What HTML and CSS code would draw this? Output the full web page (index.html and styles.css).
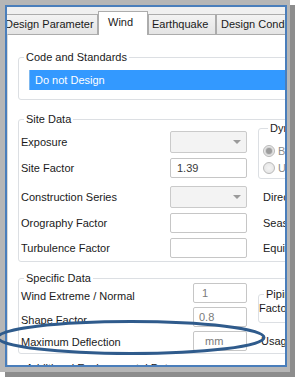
FILE: index.html
```
<!DOCTYPE html>
<html>
<head>
<meta charset="utf-8">
<link rel="stylesheet" href="styles.css">
</head>
<body>
<div class="shot">
  <div class="frame">
    <div class="tabs">
      <div class="tab t-dp">Design Parameter</div>
      <div class="tab active t-wind">Wind</div>
      <div class="tab t-eq">Earthquake</div>
      <div class="tab t-dc">Design Condition</div>
    </div>
    <div class="panel">
      <fieldset class="group g-code">
        <legend>Code and Standards</legend>
        <div class="listsel">Do not Design</div>
      </fieldset>

      <fieldset class="group g-site">
        <legend>Site Data</legend>
        <div class="site-grid">
          <div class="lbl h22">Exposure</div>
          <div class="dd"><span class="arrow"></span></div>
          <fieldset class="group sub g-dyn">
            <legend>Dynamic</legend>
            <div class="radio-row"><span class="radio on"></span><span>Basic</span></div>
            <div class="radio-row"><span class="radio"></span><span>User</span></div>
          </fieldset>

          <div class="lbl h20">Site Factor</div>
          <div class="inp">1.39</div>

          <div class="lbl h22">Construction Series</div>
          <div class="dd"><span class="arrow"></span></div>
          <div class="lbl h22 rlbl">Direction Factor</div>

          <div class="lbl h20">Orography Factor</div>
          <div class="inp"></div>
          <div class="lbl h20 rlbl">Season Factor</div>

          <div class="lbl h20">Turbulence Factor</div>
          <div class="inp"></div>
          <div class="lbl h20 rlbl">Equivalent Factor</div>
        </div>
      </fieldset>

      <fieldset class="group g-spec">
        <legend>Specific Data</legend>
        <div class="spec-grid">
          <div class="lbl h20 low">Wind Extreme / Normal</div>
          <div class="inp gray p-one">1</div>
          <fieldset class="group sub g-pipe">
            <legend>Piping</legend>
            <div class="lbl facto">Factor</div>
          </fieldset>

          <div class="lbl h20 low">Shape Factor</div>
          <div class="inp gray">0.8</div>

          <div class="lbl h20 low1">Maximum Deflection</div>
          <div class="inp gray p-mm">mm</div>
          <div class="lbl h20 rlbl2">Usage</div>
        </div>
      </fieldset>

      <fieldset class="group g-add">
        <legend>Additional Environmental Data</legend>
      </fieldset>
    </div>
  </div>
</div>
<svg class="mark" width="295" height="377" viewBox="0 0 295 377">
  <ellipse cx="131" cy="337.5" rx="133" ry="16" fill="none" stroke="#2f5b8c" stroke-width="3"/>
</svg>
</body>
</html>
```
FILE: styles.css
```
* { box-sizing: border-box; }

body {
  margin: 0;
  width: 295px;
  height: 377px;
  overflow: hidden;
  position: relative;
  background: #ffffff;
  font-family: "Liberation Sans", Arial, sans-serif;
  font-size: 11px;
  color: #1a1a1a;
}

.shot {
  width: 290px;
  height: 372px;
  padding: 5px 0 0 5px;
  background: #b6b6b6;
  box-shadow: 5px 5px 0 #8d8d8d;
}

.frame {
  width: 282px;
  height: 362px;
  border: 2px solid #4a7ebb;
  background: #f0f0f0;
  overflow: hidden;
}

/* tabs */
.tabs {
  display: flex;
  align-items: flex-end;
  height: 27px;
  margin-left: -7px;
  white-space: nowrap;
}

.tab {
  flex: none;
  height: 20px;
  line-height: 19px;
  border: 1px solid #acacac;
  border-bottom: none;
  background: linear-gradient(#f3f3f3, #e4e4e4);
  color: #1a1a1a;
}

.t-dp { width: 98px; padding-left: 4px; }
.t-eq { width: 68px; padding-left: 3px; }
.t-dc { width: 90px; padding-left: 4px; }

.tab.active {
  height: 24px;
  line-height: 21px;
  background: #ffffff;
  position: relative;
  z-index: 1;
  margin-bottom: -1px;
}
.t-wind { width: 50px; padding-left: 9px; }

/* panel */
.panel {
  width: 430px;
  height: 340px;
  background: #ffffff;
  border-top: 1px solid #acacac;
  border-left: 1px solid #d9d9d9;
  padding-left: 10px;
}

fieldset.group {
  margin: 0;
  padding: 0;
  min-width: 0;
  border: 1px solid #dcdfe3;
  border-radius: 3px;
}

legend {
  padding: 0 2px;
  margin-left: 5px;
  line-height: 13px;
  color: #1a1a1a;
}

.g-code { margin-top: 16px !important; }
.g-site { margin-top: 13px !important; }
.g-spec { margin-top: 10px !important; }
.g-add { margin-top: 8px !important; height: 30px; }

.listsel {
  margin: 6px 0 9px 10px;
  height: 20px;
  line-height: 20px;
  padding-left: 5px;
  background: #3399ff;
  color: #ffffff;
  border-left: 1px solid #7db8f0;
}

/* site grid */
.site-grid {
  display: grid;
  grid-template-columns: 149px 77px 160px;
  grid-template-rows: 27px 28px 27px 25px 20px;
  align-items: start;
  margin: 5px 0 3px 2px;
}

.lbl { white-space: nowrap; }
.h22 { height: 22px; line-height: 22px; }
.h20 { height: 20px; line-height: 20px; }
.rlbl { padding-left: 16px; }

.dd {
  height: 22px;
  border: 1px solid #cacaca;
  border-radius: 2px;
  background: #f3f3f3;
  display: flex;
  align-items: center;
  justify-content: flex-end;
  padding-right: 5px;
}

.arrow {
  width: 0;
  height: 0;
  border-left: 4px solid transparent;
  border-right: 4px solid transparent;
  border-top: 4px solid #9a9a9a;
}

.inp {
  height: 20px;
  line-height: 18px;
  border: 1px solid #c6c6c6;
  border-radius: 2px;
  background: #ffffff;
  padding-left: 6px;
  color: #3a3a3a;
}

.g-dyn {
  grid-column: 3;
  grid-row: 1 / span 2;
  margin: -9px 0 0 11px !important;
  width: 140px;
  padding: 0 0 4px 4px !important;
}

.radio-row {
  display: flex;
  align-items: center;
  gap: 3px;
  height: 12px;
  margin-top: 5px;
  color: #8a8a8a;
}
.radio-row:first-of-type { margin-top: 10px; }

.radio {
  width: 12px;
  height: 12px;
  border-radius: 50%;
  border: 1px solid #b9b9b9;
  background: radial-gradient(circle, #f4f4f4 0, #e2e2e2 100%);
  display: flex;
  align-items: center;
  justify-content: center;
}
.radio.on::after {
  content: "";
  width: 6px;
  height: 6px;
  border-radius: 50%;
  background: #9d9d9d;
  box-shadow: 0 0 0 1px #d0d0d0;
}

/* specific grid */
.spec-grid {
  display: grid;
  grid-template-columns: 172px 54px 160px;
  grid-template-rows: 24px 24px 20px;
  align-items: start;
  margin: -2px 0 2px 2px;
}

.low { padding-top: 3px; line-height: 20px; height: 23px; }
.low1 { padding-top: 1px; }

.gray { color: #7a7a7a; padding-left: 5px; }
.p-one { padding-left: 8px; }
.p-mm { padding-left: 11px; }

.g-pipe {
  grid-column: 3;
  grid-row: 1 / span 2;
  margin: 5px 0 0 11px !important;
  width: 140px;
  padding: 0 0 7px 0 !important;
}
.facto { line-height: 13px; margin-top: 1px; }
.rlbl2 { padding-left: 14px; }

.mark {
  position: absolute;
  left: 0;
  top: 0;
  pointer-events: none;
}
```
